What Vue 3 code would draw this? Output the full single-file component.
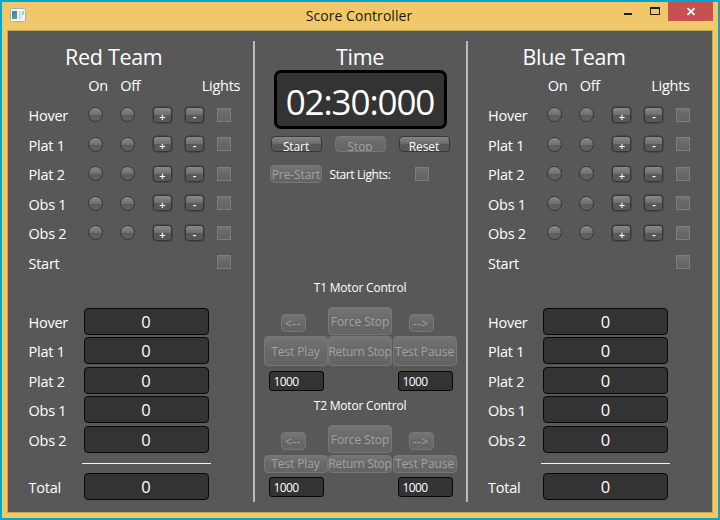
<script setup>
import { ref } from 'vue'

const goals = ['Hover', 'Plat 1', 'Plat 2', 'Obs 1', 'Obs 2']
const teams = ref([
  { side: 'red', title: 'Red Team', scores: [0, 0, 0, 0, 0] },
  { side: 'blue', title: 'Blue Team', scores: [0, 0, 0, 0, 0] },
])
const motors = ref([
  { id: 't1', title: 'T1 Motor Control', left: '1000', right: '1000' },
  { id: 't2', title: 'T2 Motor Control', left: '1000', right: '1000' },
])
const time = ref('02:30:000')
const total = (team) => team.scores.reduce((a, b) => a + b, 0)
</script>

<template>
  <div class="window">
    <header class="titlebar">
      <svg class="app-icon" width="16" height="14" viewBox="0 0 16 14">
        <defs>
          <linearGradient id="pane" x1="0" y1="0" x2="0.6" y2="1">
            <stop offset="0" stop-color="#3d7fb5" />
            <stop offset="1" stop-color="#52a878" />
          </linearGradient>
        </defs>
        <rect x="0.5" y="0.5" width="15" height="13" rx="1" fill="#f4f5f5" stroke="#aab1b8" />
        <rect x="2" y="3" width="5" height="8" fill="url(#pane)" />
        <rect x="8.5" y="3" width="3" height="8" fill="#dcdcdc" />
        <rect x="12" y="3" width="2" height="4" fill="#a9d2c8" />
      </svg>
      <h1>Score Controller</h1>
      <div class="controls">
        <svg width="89" height="19" viewBox="0 0 89 19">
          <rect x="44" y="0" width="45" height="19" fill="#c75050" />
          <rect x="0" y="11" width="8" height="2" fill="#1f1f1f" />
          <rect x="26.5" y="6" width="9" height="6.5" fill="none" stroke="#1f1f1f" />
          <rect x="26" y="5" width="10" height="2" fill="#1f1f1f" />
          <path d="M63.500 6.200l7 6.600M70.500 6.200l-7 6.600" stroke="#fff" stroke-width="1.8" />
        </svg>
      </div>
    </header>

    <main class="content">
      <section v-for="team in teams" :key="team.side" class="team" :class="team.side">
        <h2>{{ team.title }}</h2>
        <div class="row head">
          <span></span><span>On</span><span>Off</span><span></span><span class="lights">Lights</span>
        </div>
        <div v-for="g in goals" :key="g" class="row">
          <label>{{ g }}</label>
          <i class="radio"></i>
          <i class="radio"></i>
          <button class="step">+</button>
          <button class="step">-</button>
          <i class="check"></i>
        </div>
        <div class="row">
          <label>Start</label>
          <i class="check last"></i>
        </div>
        <div class="row"></div>
        <div v-for="(g, i) in goals" :key="'s' + g" class="row score">
          <label>{{ g }}</label>
          <output>{{ team.scores[i] }}</output>
        </div>
        <hr />
        <div class="row score">
          <label>Total</label>
          <output>{{ total(team) }}</output>
        </div>
      </section>

      <section class="middle">
        <h2>Time</h2>
        <div class="timer">{{ time }}</div>
        <div class="actions">
          <button class="btn"><span>Start</span></button>
          <button class="btn off"><span>Stop</span></button>
          <button class="btn"><span>Reset</span></button>
        </div>
        <div class="prestart">
          <button class="btn off"><span>Pre-Start</span></button>
          <span class="caption">Start Lights:</span>
          <i class="check"></i>
        </div>
        <div v-for="m in motors" :key="m.id" class="motor" :class="m.id">
          <h3>{{ m.title }}</h3>
          <div class="keys top">
            <button class="btn off arrow"><span>&lt;--</span></button>
            <button class="btn off"><span>Force Stop</span></button>
            <button class="btn off arrow"><span>--&gt;</span></button>
          </div>
          <div class="keys tests">
            <button class="btn off"><span>Test Play</span></button>
            <button class="btn off"><span>Return Stop</span></button>
            <button class="btn off"><span>Test Pause</span></button>
          </div>
          <div class="fields">
            <div class="field">{{ m.left }}</div>
            <div class="field">{{ m.right }}</div>
          </div>
        </div>
      </section>
    </main>
  </div>
</template>

<style>
body {
  margin: 0;
  overflow: hidden;
}
</style>

<style scoped>
* {
  box-sizing: border-box;
}
.window {
  width: 720px;
  height: 520px;
  border: 2px solid #00a8d0;
  background: #f0c869;
  padding: 0 5px 5px;
  display: flex;
  flex-direction: column;
  font-family: "Open Sans", "Noto Sans", sans-serif;
  color: #fff;
}
h1, h2, h3 {
  margin: 0;
  font-weight: 400;
  white-space: nowrap;
}
.titlebar {
  height: 28px;
  flex: none;
  display: grid;
  grid-template-columns: 99px 1fr 101px;
}
.app-icon {
  margin: 6px 0 0 3px;
}
h1 {
  text-align: center;
  color: #1c1810;
  font-size: 14px;
  line-height: 27px;
  letter-spacing: 0.05px;
}
.controls {
  display: flex;
  justify-content: flex-end;
}
.content {
  flex: 1;
  min-height: 0;
  background: #585858;
  border: 1px solid #c9a552;
  display: grid;
  grid-template-columns: 244.5px 215px 244.5px;
  padding-top: 10px;
}
.team, .middle {
  grid-row: 1;
}
.team {
  padding-left: 20.5px;
}
.red {
  grid-column: 1;
}
.blue {
  grid-column: 3;
}
h2 {
  font-size: 21.5px;
  line-height: 32px;
  height: 29.2px;
  letter-spacing: -0.3px;
}
.team h2 {
  padding-left: 36.5px;
}
.blue h2 {
  padding-left: 34.5px;
}
.row {
  height: 29.55px;
  display: grid;
  grid-template-columns: 59px 32px 33px 32px 32px 14px;
  align-items: center;
  font-size: 14.5px;
  letter-spacing: -0.25px;
  white-space: nowrap;
}
.row label {
  padding-top: 2px;
}
.head {
  padding: 1px 0 0 0.7px;
}
.head .lights {
  margin-left: 16.5px;
}
.blue .head .lights {
  margin-left: 6.5px;
}
.radio {
  width: 15px;
  height: 15px;
  border-radius: 50%;
  border: 1.5px solid #363636;
  background: linear-gradient(#8a8a8a, #707070 50%, #5c5c5c 54%, #626262);
}
.step {
  width: 19px;
  height: 16px;
  padding: 4px 0 0 1px;
  border: 1.5px solid #363636;
  border-radius: 3.5px;
  background: linear-gradient(#8a8a8a, #6e6e6e 48%, #585858 54%, #585858);
  color: #fff;
  font: 600 11px/8px "Open Sans", sans-serif;
  box-shadow: 0 0 0 0.5px #3a3a3a;
}
.check {
  width: 14px;
  height: 14px;
  border: 1px solid #7d7d7d;
  background: linear-gradient(#727272, #686868 48%, #646464);
}
.check.last {
  grid-column: 6;
}
.score {
  grid-template-columns: 55px 125px;
}
output {
  height: 27px;
  border: 1.5px solid #080808;
  border-radius: 4px;
  background: #333;
  text-align: center;
  font-size: 16.5px;
  line-height: 25px;
  letter-spacing: 0;
}
hr {
  width: 129px;
  height: 1px;
  border: 0;
  background: #f4f4f4;
  margin: 8.65px 0 8px 53px;
}
.middle {
  grid-column: 2;
  height: 461px;
  border-left: 2px solid #b9b9c1;
  border-right: 2px solid #b9b9c1;
  display: flex;
  flex-direction: column;
}
.middle h2 {
  text-align: center;
}
.timer {
  align-self: center;
  width: 173px;
  height: 59px;
  border: 3px solid #000;
  border-radius: 7px;
  background: #333;
  text-align: center;
  font-size: 35px;
  line-height: 57px;
  letter-spacing: -1.1px;
}
.btn {
  padding: 0;
  border: 1.5px solid #383838;
  border-radius: 4px;
  background: linear-gradient(#858585, #6b6b6b 48%, #595959 52%, #585858);
  color: #fff;
  overflow: hidden;
  display: flex;
  justify-content: center;
  align-items: center;
  font: 400 12px/16px "Open Sans", sans-serif;
  letter-spacing: -0.1px;
  white-space: nowrap;
}
.btn span {
  flex: none;
}
.btn.off {
  border: 1px solid #777;
  background: linear-gradient(#757575, #686868 50%, #646464);
  color: #a2a2a2;
}
.actions {
  display: flex;
  gap: 13px;
  margin: 7px 0 0 16px;
}
.actions .btn {
  width: 51px;
  height: 16px;
}
.actions .btn span {
  margin-top: 5px;
}
.prestart {
  display: flex;
  align-items: center;
  margin: 13px 0 0 15.500px;
  height: 18px;
}
.prestart .btn {
  width: 52px;
  height: 18px;
}
.prestart .btn span {
  padding-top: 1px;
}
.caption {
  width: 85px;
  margin-left: 7.500px;
  padding-top: 1px;
  font-size: 12px;
  letter-spacing: -0.4px;
}
.motor h3 {
  text-align: center;
  font-size: 12px;
  line-height: 16px;
  letter-spacing: -0.2px;
}
.t1 {
  margin-top: 97px;
}
.t2 {
  margin-top: 7px;
}
.keys {
  display: grid;
  grid-template-columns: 64px 64px 64px;
  column-gap: 0.5px;
  justify-content: center;
}
.keys.top {
  height: 28px;
  margin-top: 11px;
  align-items: stretch;
}
.keys .btn span {
  padding-top: 2px;
}
.keys .arrow {
  width: 25px;
  height: 18px;
  align-self: center;
  justify-self: center;
  margin: 4px 5px 0 0;
}
.keys .arrow:last-child {
  margin-right: 7px;
}
.arrow span {
  letter-spacing: 0.4px;
}
.tests {
  height: 30px;
  margin-top: 1px;
}
.tests .btn:nth-child(2) {
  letter-spacing: -0.32px;
}
.t2 .tests {
  height: 18px;
  margin-top: 2px;
}
.t2 .tests .btn span {
  padding-top: 0;
}
.fields {
  display: flex;
  gap: 74px;
  margin: 5px 0 0 14px;
}
.t2 .fields {
  margin-top: 4px;
}
.field {
  width: 55px;
  height: 20px;
  border: 1.5px solid #080808;
  border-radius: 3px;
  background: #333;
  padding-left: 4px;
  font-size: 12px;
  line-height: 19px;
  letter-spacing: -0.6px;
}
</style>
